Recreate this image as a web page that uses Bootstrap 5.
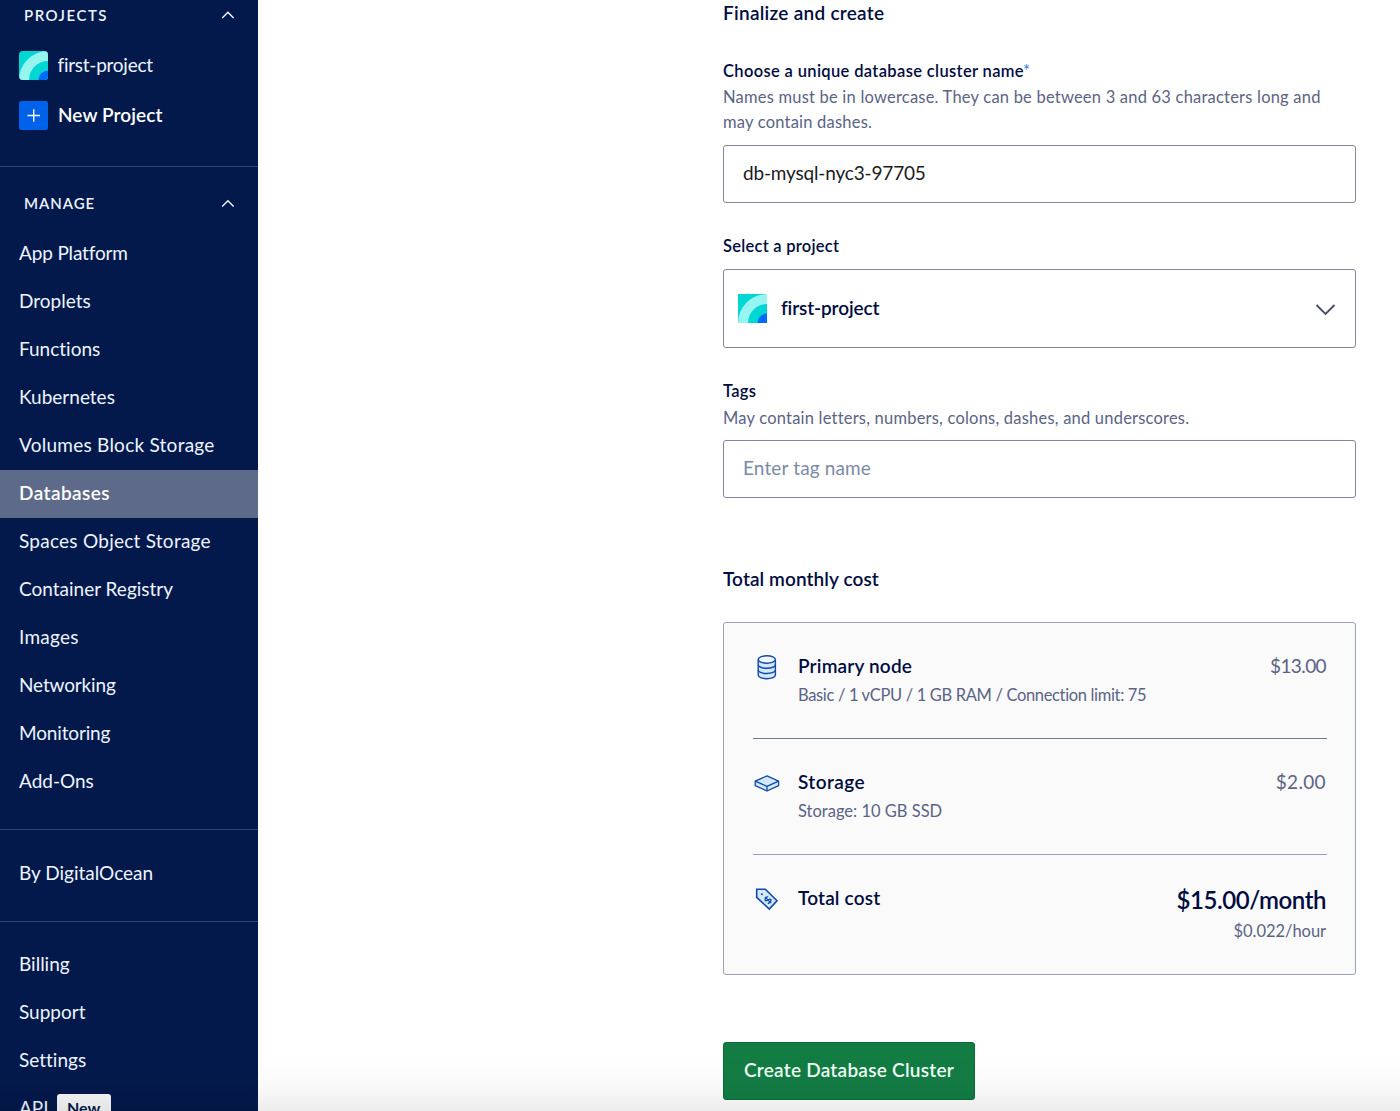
<!DOCTYPE html>
<html lang="en">
<head>
<meta charset="utf-8">
<meta name="viewport" content="width=device-width, initial-scale=1">
<title>Create Database Cluster</title>
<link href="https://cdn.jsdelivr.net/npm/bootstrap@5.3.0/dist/css/bootstrap.min.css" rel="stylesheet">
<style>
body{font-family:Lato,"Open Sans",sans-serif;font-size:19px;color:#000c40;height:1111px;overflow:hidden;background:#fff;font-variant-ligatures:none}
.side{width:258px;height:1111px;background:#03194b;color:#edf4ff}
.side-head{height:32px;padding:0 23px 0 24px;font-size:15px;font-weight:600;letter-spacing:1.5px}
.side-head span{padding-bottom:1px}
.side-head.first-head{height:31px;margin-bottom:1px}
.side-head.tight{letter-spacing:.95px}
.side-proj{height:50px;padding-left:19px;line-height:30px}
.side-sep{border-top:1px solid #2f4372}
.side .nav-link{height:48px;line-height:45px;padding:0 0 0 19px;color:#edf4ff;white-space:nowrap;letter-spacing:0}
.side .nav-link.wide{letter-spacing:.25px}
.side .nav-link.shut{letter-spacing:-.15px}
.side .nav-link.active{background:#5e6a89;font-weight:600;color:#fff;letter-spacing:.44px}
.plus-box{width:29px;height:29px;margin-left:-.5px}
.new-tag{background:#f6f7f9;color:#03194b;font-size:16px;font-weight:700;border-radius:3px;height:28px;line-height:27px;width:54px;margin-left:8px;margin-top:9px}
.main{padding:1px 0 0 465px;width:1098px}
.ttl{font-size:19px;font-weight:600;line-height:24px;letter-spacing:.27px}
.ttl.snug{letter-spacing:.1px}
.lbl{font-size:16.5px;font-weight:600;line-height:26px;letter-spacing:.35px}
.lbl.snug{letter-spacing:.25px}
.star{color:#2f7df0;font-weight:400;margin-left:-1px}
.hint{font-size:16.5px;line-height:25px;color:#5b6385;letter-spacing:.21px}
.main .field{height:58px;border:1px solid #85859f;border-radius:3px;padding:0 19px 3px;font-size:19px;color:#1b1b22;letter-spacing:-.17px}
.main .field::placeholder{color:#7c8aa8;opacity:1;letter-spacing:.14px}
.picker{height:79px;border:1px solid #85859f;border-radius:3px;padding:0 19px 0 14px}
.cost{height:353px;border:1px solid #9a9fba;border-radius:3px;background:#fafafa;padding:0 28px 0 29px}
.cost-row{height:116px;padding-top:29px}
.cost-row.top-row{height:115px}
.cost-row + .cost-row{border-top:1px solid #9a9eb6}
.cost-row.first-sep{border-top-color:#6a7896!important}
.cost-ico{width:46px;flex:none;margin-left:-1px;margin-top:-1px}
.name{font-size:19px;font-weight:600;line-height:28px;letter-spacing:.17px}
.name.open{letter-spacing:.43px}
.name.shut{letter-spacing:-.12px}
.amt{font-size:19px;line-height:28px;color:#5b6385;letter-spacing:-.6px;padding-right:1px}
.amt.open{letter-spacing:.35px}
.det{margin-top:3px}
.det.shut{letter-spacing:-.34px}
.det.mid{letter-spacing:0}
.hour{letter-spacing:-.05px;margin-top:3px}
.big{font-size:24px;font-weight:600;line-height:32px;letter-spacing:-.45px}
.main .go{width:252px;height:58px;background:#127c43;border:1px solid #0b6a35;border-radius:3px;color:#effff5;font-size:19px;font-weight:600;padding:0 0 1px;letter-spacing:.26px}
.fade-low{left:0;right:0;bottom:0;height:56px;background:linear-gradient(rgba(0,0,0,0),rgba(0,0,0,.025) 60%,rgba(0,0,0,.08));pointer-events:none}
</style>
<script src="https://cdn.jsdelivr.net/npm/bootstrap@5.3.0/dist/js/bootstrap.bundle.min.js"></script>
</head>
<body class="position-relative">
<svg width="0" height="0" class="position-absolute"><defs>
<g id="proj"><rect width="29" height="29" fill="#00d7d2"/><path d="M0 29A29 29 0 0 1 29 0V29Z" fill="#96f5f0"/><path d="M10 29A19 19 0 0 1 29 10V29Z" fill="#00d7d2"/><path d="M19.500 29A9.500 9.500 0 0 1 29 19.500V29Z" fill="#0069ff"/></g>
</defs></svg>
<div class="d-flex h-100">
<nav class="side flex-shrink-0 overflow-hidden">
  <div class="side-head first-head d-flex align-items-center justify-content-between"><span>PROJECTS</span>
    <svg width="14" height="32" viewBox="0 0 14 32" fill="none" stroke="#edf4ff" stroke-width="1.500"><path d="M1.200 18 6.900 12.200 12.600 18"/></svg></div>
  <div class="pt-2">
  <div class="side-proj d-flex align-items-center"><svg class="rounded-1" width="29" height="29"><use href="#proj"/></svg><span style="margin-left:9.5px;letter-spacing:-.25px">first-project</span></div>
  <div class="side-proj d-flex align-items-center fw-semibold text-white"><svg class="plus-box" viewBox="0 0 29 29"><rect width="29" height="29" rx="2.500" fill="#0061eb"/><path d="M8.500 14.500h12.500M14.700 8.200v12.500" stroke="#fff" stroke-width="1.400"/></svg><span style="margin-left:10.5px;letter-spacing:.08px">New Project</span></div>
  </div>
  <div class="side-sep" style="margin-top:26px;padding-top:21px">
    <div class="side-head tight d-flex align-items-center justify-content-between"><span>MANAGE</span>
    <svg width="14" height="32" viewBox="0 0 14 32" fill="none" stroke="#edf4ff" stroke-width="1.500"><path d="M1.200 18.500 6.900 12.700 12.600 18.500"/></svg></div>
  </div>
  <div class="nav flex-column" style="margin-top:10px">
    <a class="nav-link shut">App Platform</a>
    <a class="nav-link">Droplets</a>
    <a class="nav-link">Functions</a>
    <a class="nav-link">Kubernetes</a>
    <a class="nav-link wide">Volumes Block Storage</a>
    <a class="nav-link active">Databases</a>
    <a class="nav-link wide">Spaces Object Storage</a>
    <a class="nav-link">Container Registry</a>
    <a class="nav-link wide">Images</a>
    <a class="nav-link shut">Networking</a>
    <a class="nav-link shut">Monitoring</a>
    <a class="nav-link">Add-Ons</a>
  </div>
  <div class="side-sep nav flex-column" style="margin-top:23px;padding:20px 0 23px"><a class="nav-link">By DigitalOcean</a></div>
  <div class="side-sep nav flex-column" style="padding-top:19px">
    <a class="nav-link">Billing</a>
    <a class="nav-link">Support</a>
    <a class="nav-link">Settings</a>
    <a class="nav-link d-flex"><span>API</span><span class="new-tag text-center">New</span></a>
  </div>
</nav>
<main class="main">
  <h2 class="ttl m-0">Finalize and create</h2>
  <div style="margin-top:33px">
    <div class="lbl">Choose a unique database cluster name<span class="star">*</span></div>
    <div class="hint" style="padding-top:1px">Names must be in lowercase. They can be between 3 and 63 characters long and<br>may contain dashes.</div>
    <input class="form-control field" style="margin-top:10px" value="db-mysql-nyc3-97705">
  </div>
  <div style="margin-top:30px">
    <div class="lbl snug">Select a project</div>
    <div class="picker d-flex align-items-center" style="margin-top:10px"><svg width="29" height="29"><use href="#proj"/></svg><span class="name shut" style="margin-left:14px;padding-bottom:2px">first-project</span>
      <svg class="ms-auto" width="22" height="22" viewBox="0 0 22 22" fill="none" stroke="#444b6e" stroke-width="1.800"><path d="M2.500 7 11.500 16 20.500 7"/></svg></div>
  </div>
  <div style="margin-top:30px">
    <div class="lbl snug">Tags</div>
    <div class="hint" style="padding-top:2px">May contain letters, numbers, colons, dashes, and underscores.</div>
    <input class="form-control field" style="margin-top:9px" placeholder="Enter tag name">
  </div>
  <h2 class="ttl snug mb-0" style="margin-top:69px">Total monthly cost</h2>
  <div class="cost" style="margin-top:31px">
    <div class="cost-row top-row d-flex">
      <div class="cost-ico"><svg width="30" height="30" viewBox="0 0 30 30" fill="#d3e8fc" stroke="#1149a8" stroke-width="1.400"><path d="M6.200 7.500V23c0 2 3.600 3.700 8.600 3.700s8.600-1.700 8.600-3.700V7.500"/><path d="M6.200 12.700c0 2 3.600 3.600 8.600 3.600s8.600-1.600 8.600-3.600M6.200 17.900c0 2 3.600 3.600 8.600 3.600s8.600-1.600 8.600-3.600" fill="none"/><ellipse cx="14.800" cy="7.500" rx="8.600" ry="3.700" fill="#f1f8ff"/></svg></div>
      <div><div class="name">Primary node</div><div class="hint det shut">Basic / 1 vCPU / 1 GB RAM / Connection limit: 75</div></div>
      <div class="amt ms-auto">$13.00</div>
    </div>
    <div class="cost-row first-sep d-flex">
      <div class="cost-ico"><svg width="30" height="30" viewBox="0 0 30 30" fill="#d3e8fc" stroke="#1149a8" stroke-width="1.300" stroke-linejoin="round"><path d="M3.200 13.200 15 7.900l11.600 5.300v4.500L15 23 3.200 17.700Z"/><path d="M3.200 13.200 15 18.300l11.600-5.100M15 18.300V23" fill="none"/></svg></div>
      <div><div class="name open">Storage</div><div class="hint det mid">Storage: 10 GB SSD</div></div>
      <div class="amt open ms-auto">$2.00</div>
    </div>
    <div class="cost-row d-flex">
      <div class="cost-ico"><svg width="30" height="30" viewBox="0 0 30 30" fill="#d3e8fc" stroke="#1149a8" stroke-width="1.600"><path d="M4.700 5.300h8.600L25 16.800 17.300 25 4.700 13.300Z"/><circle cx="9.900" cy="10.200" r="1" fill="#1149a8" stroke="none"/><g transform="translate(16 16) rotate(-45)" fill="none" stroke-width="1.300"><path d="M2.400-2.200C1.800-3.200-2.200-3.400-2.300-1.500-2.300.4 2.400-.4 2.400 1.600 2.300 3.400-1.900 3.200-2.500 2.100M0-4.400V4.400"/></g></svg></div>
      <div class="name">Total cost</div>
      <div class="ms-auto text-end" style="padding-right:1px"><div class="big">$15.00/month</div><div class="hint hour">$0.022/hour</div></div>
    </div>
  </div>
  <button class="btn go d-block" style="margin-top:67px">Create Database Cluster</button>
</main>
</div>
<div class="fade-low position-absolute"></div>
</body>
</html>
